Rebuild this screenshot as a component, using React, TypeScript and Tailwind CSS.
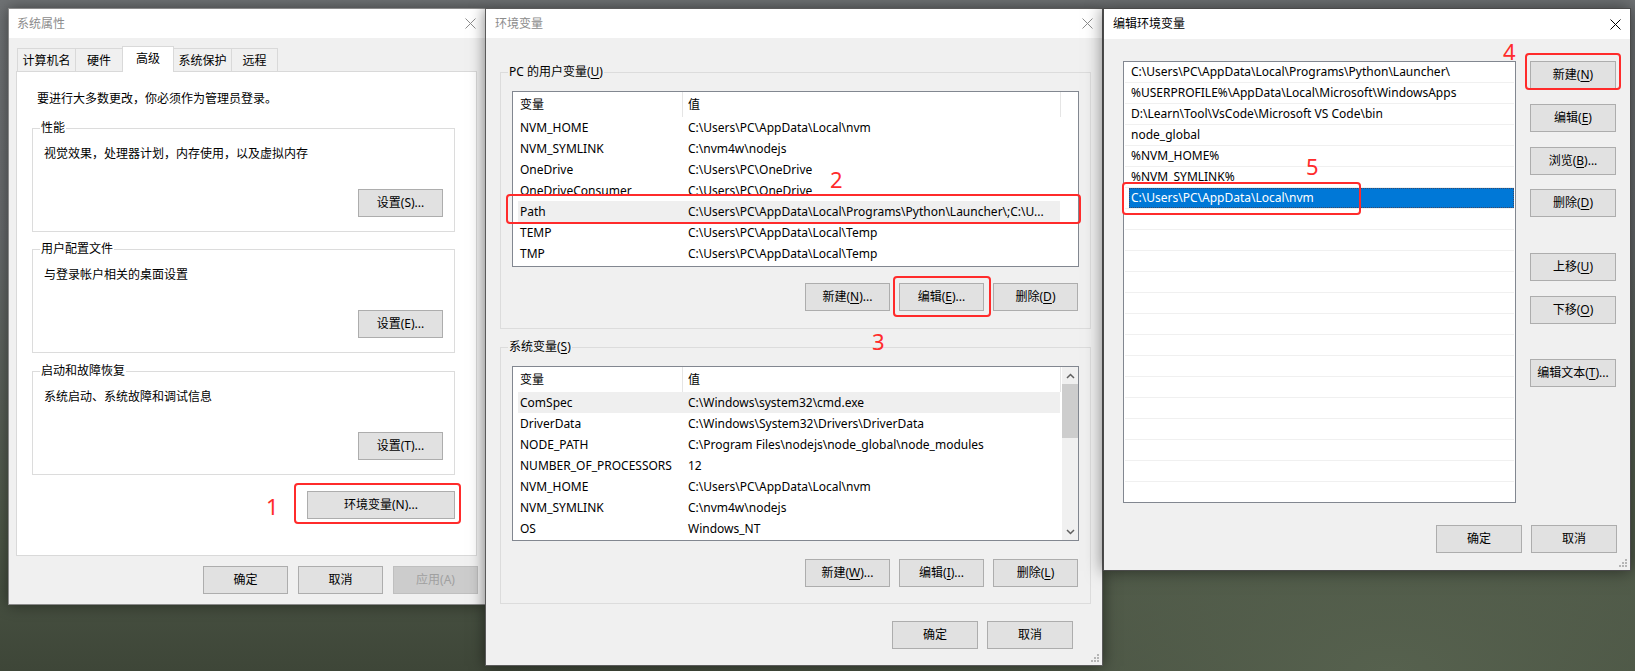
import React from 'react'

type Kids = { children?: React.ReactNode }

const userVars: [string, string][] = [
  ['NVM_HOME', 'C:\\Users\\PC\\AppData\\Local\\nvm'],
  ['NVM_SYMLINK', 'C:\\nvm4w\\nodejs'],
  ['OneDrive', 'C:\\Users\\PC\\OneDrive'],
  ['OneDriveConsumer', 'C:\\Users\\PC\\OneDrive'],
  ['Path', 'C:\\Users\\PC\\AppData\\Local\\Programs\\Python\\Launcher\\;C:\\U...'],
  ['TEMP', 'C:\\Users\\PC\\AppData\\Local\\Temp'],
  ['TMP', 'C:\\Users\\PC\\AppData\\Local\\Temp'],
]

const sysVars: [string, string][] = [
  ['ComSpec', 'C:\\Windows\\system32\\cmd.exe'],
  ['DriverData', 'C:\\Windows\\System32\\Drivers\\DriverData'],
  ['NODE_PATH', 'C:\\Program Files\\nodejs\\node_global\\node_modules'],
  ['NUMBER_OF_PROCESSORS', '12'],
  ['NVM_HOME', 'C:\\Users\\PC\\AppData\\Local\\nvm'],
  ['NVM_SYMLINK', 'C:\\nvm4w\\nodejs'],
  ['OS', 'Windows_NT'],
]

const pathItems = [
  'C:\\Users\\PC\\AppData\\Local\\Programs\\Python\\Launcher\\',
  '%USERPROFILE%\\AppData\\Local\\Microsoft\\WindowsApps',
  'D:\\Learn\\Tool\\VsCode\\Microsoft VS Code\\bin',
  'node_global',
  '%NVM_HOME%',
  '%NVM_SYMLINK%',
  'C:\\Users\\PC\\AppData\\Local\\nvm',
]

function U({ children }: Kids) {
  return <span className="underline underline-offset-[2px]">{children}</span>
}

function Btn({ children, className = '', disabled = false }: Kids & { className?: string; disabled?: boolean }) {
  return (
    <div
      className={`flex h-[28px] shrink-0 items-center justify-center border text-[12px] ${
        disabled ? 'border-[#bfbfbf] bg-[#cccccc] text-[#a0a0a0]' : 'border-[#adadad] bg-[#e1e1e1] text-black'
      } ${className}`}
    >
      {children}
    </div>
  )
}

function CloseX({ color }: { color: string }) {
  return (
    <svg width="11" height="11" viewBox="0 0 11 11">
      <path d="M0.5 0.5 L10.5 10.5 M10.5 0.5 L0.5 10.5" stroke={color} strokeWidth="1" fill="none" />
    </svg>
  )
}

function Grip() {
  return (
    <svg className="absolute bottom-[2px] right-[2px]" width="9" height="9" viewBox="0 0 9 9">
      {[
        [6, 0],
        [3, 3],
        [6, 3],
        [0, 6],
        [3, 6],
        [6, 6],
      ].map(([x, y]) => (
        <rect key={`${x}-${y}`} x={x} y={y} width="2" height="2" fill="#b5b5b5" />
      ))}
    </svg>
  )
}

function Chevron({ up = false }: { up?: boolean }) {
  return (
    <svg width="9" height="6" viewBox="0 0 9 6">
      <path d={up ? 'M1 5 L4.5 1.5 L8 5' : 'M1 1 L4.5 4.5 L8 1'} stroke="#606060" strokeWidth="1.5" fill="none" />
    </svg>
  )
}

function Group({ label, bg, className = '', children }: Kids & { label: React.ReactNode; bg: string; className?: string }) {
  return (
    <div className={`relative flex flex-col border ${className}`}>
      <span className={`absolute -top-[9px] left-[7px] px-[1px] leading-[16px] ${bg}`}>{label}</span>
      {children}
    </div>
  )
}

function Scrollbar() {
  return (
    <div className="flex w-[16px] shrink-0 flex-col bg-[#f0f0f0]">
      <div className="flex h-[17px] items-center justify-center">
        <Chevron up />
      </div>
      <div className="h-[54px] bg-[#cdcdcd]" />
      <div className="flex-1" />
      <div className="flex h-[17px] items-center justify-center">
        <Chevron />
      </div>
    </div>
  )
}

function VarList({ rows, highlight, scroll, height }: { rows: [string, string][]; highlight: number; scroll?: boolean; height: string }) {
  return (
    <div className={`flex w-[567px] border border-[#828790] bg-white ${height}`}>
      <div className="flex min-w-0 flex-1 flex-col overflow-hidden">
        <div className="flex h-[25px] shrink-0">
          <div className="flex w-[169px] items-center pl-[7px]">变量</div>
          <div className="flex w-[378px] items-center border-l border-[#e5e5e5] pl-[5px]">值</div>
          <div className="border-l border-[#e5e5e5]" />
        </div>
        {rows.map(([k, v], i) => (
          <div
            key={k + i}
            className={`ml-[5px] flex h-[21px] w-[542px] shrink-0 items-center ${i === highlight ? 'bg-[#efefef]' : ''}`}
          >
            <div className="w-[164px] shrink-0 overflow-hidden whitespace-nowrap pl-[2px]">{k}</div>
            <div className="min-w-0 flex-1 overflow-hidden whitespace-nowrap pl-[6px]">{v}</div>
          </div>
        ))}
      </div>
      {scroll && <Scrollbar />}
    </div>
  )
}

function SystemProperties() {
  const tabs = [
    { t: '计算机名', w: 'w-[59px]' },
    { t: '硬件', w: 'w-[48px]' },
    { t: '高级', w: 'w-[52px]', on: true },
    { t: '系统保护', w: 'w-[59px]' },
    { t: '远程', w: 'w-[47px]' },
  ]
  return (
    <div className="absolute left-[8px] top-[8px] flex h-[597px] w-[478px] flex-col border border-[#8a8a8a] bg-[#f0f0f0] shadow-[0_0_14px_rgba(0,0,0,0.45)]">
      <div className="flex h-[29px] shrink-0 items-center justify-between bg-white pl-[8px] pr-[9px]">
        <span className="text-[#8c8c8c]">系统属性</span>
        <CloseX color="#8c8c8c" />
      </div>
      <div className="flex flex-1 flex-col pl-[7px] pt-[10px]">
        <div className="flex h-[23px] items-end pl-[1px]">
          {tabs.map((tab) =>
            tab.on ? (
              <div
                key={tab.t}
                className={`relative z-10 -mb-[1px] -ml-[1px] flex h-[26px] items-center justify-center border border-b-0 border-[#d9d9d9] bg-white pb-[2px] ${tab.w}`}
              >
                {tab.t}
              </div>
            ) : (
              <div
                key={tab.t}
                className={`-ml-[1px] flex h-[23px] items-center justify-center border border-b-0 border-[#d9d9d9] pt-[2px] first:ml-0 ${tab.w}`}
              >
                {tab.t}
              </div>
            ),
          )}
        </div>
        <div className="flex h-[485px] w-[461px] flex-col border border-[#d9d9d9] bg-white pl-[15px] pt-[19px]">
          <div className="pl-[5px] leading-[16px]">要进行大多数更改，你必须作为管理员登录。</div>
          {[
            { label: '性能', text: '视觉效果，处理器计划，内存使用，以及虚拟内存', btn: '设置(S)...', mt: 'mt-[21px]' },
            { label: '用户配置文件', text: '与登录帐户相关的桌面设置', btn: '设置(E)...', mt: 'mt-[17px]' },
            { label: '启动和故障恢复', text: '系统启动、系统故障和调试信息', btn: '设置(T)...', mt: 'mt-[18px]' },
          ].map((g) => (
            <Group key={g.label} label={g.label} bg="bg-white" className={`h-[104px] w-[423px] border-[#dcdcdc] px-[11px] pt-[17px] ${g.mt}`}>
              <div className="leading-[16px]">{g.text}</div>
              <Btn className="mt-[27px] w-[85px] self-end">{g.btn}</Btn>
            </Group>
          ))}
          <div className="mt-[16px] flex w-[423px] justify-end">
            <Btn className="w-[148px]">环境变量(N)...</Btn>
          </div>
        </div>
        <div className="mt-[10px] flex justify-end gap-[10px] pr-[7px]">
          <Btn className="w-[85px]">确定</Btn>
          <Btn className="w-[85px]">取消</Btn>
          <Btn className="w-[85px]" disabled>
            应用(A)
          </Btn>
        </div>
      </div>
    </div>
  )
}

function EnvVariables() {
  return (
    <div className="absolute left-[485px] top-[8px] flex h-[658px] w-[618px] flex-col border border-[#5a5a5a] bg-[#f0f0f0] shadow-[0_0_14px_rgba(0,0,0,0.5)]">
      <div className="flex h-[29px] shrink-0 items-center justify-between bg-white pl-[9px] pr-[9px]">
        <span className="text-[#8c8c8c]">环境变量</span>
        <CloseX color="#8c8c8c" />
      </div>
      <div className="flex flex-1 flex-col pl-[14px]">
        <Group
          label={
            <>
              PC 的用户变量(<U>U</U>)
            </>
          }
          bg="bg-[#f0f0f0]"
          className="mt-[34px] h-[257px] w-[591px] border-[#dcdcdc] pl-[11px] pt-[18px]"
        >
          <VarList rows={userVars} highlight={4} height="h-[176px]" />
          <div className="mt-[16px] flex justify-end gap-[9px] pr-[12px]">
            <Btn className="w-[85px]">
              新建(<U>N</U>)...
            </Btn>
            <Btn className="w-[85px]">
              编辑(<U>E</U>)...
            </Btn>
            <Btn className="w-[85px]">
              删除(<U>D</U>)
            </Btn>
          </div>
        </Group>
        <Group
          label={
            <>
              系统变量(<U>S</U>)
            </>
          }
          bg="bg-[#f0f0f0]"
          className="mt-[18px] h-[257px] w-[591px] border-[#dcdcdc] pl-[11px] pt-[18px]"
        >
          <VarList rows={sysVars} highlight={0} scroll height="h-[175px]" />
          <div className="mt-[18px] flex justify-end gap-[9px] pr-[12px]">
            <Btn className="w-[85px]">
              新建(<U>W</U>)...
            </Btn>
            <Btn className="w-[85px]">
              编辑(<U>I</U>)...
            </Btn>
            <Btn className="w-[85px]">
              删除(<U>L</U>)
            </Btn>
          </div>
        </Group>
        <div className="mt-[17px] flex justify-end gap-[9px] pr-[29px]">
          <Btn className="w-[86px]">确定</Btn>
          <Btn className="w-[86px]">取消</Btn>
        </div>
      </div>
      <Grip />
    </div>
  )
}

function EditPath() {
  const side: { label: React.ReactNode; mt: string }[] = [
    { label: <>新建(<U>N</U>)</>, mt: 'mt-0' },
    { label: <>编辑(<U>E</U>)</>, mt: 'mt-[15px]' },
    { label: <>浏览(<U>B</U>)...</>, mt: 'mt-[15px]' },
    { label: <>删除(<U>D</U>)</>, mt: 'mt-[14px]' },
    { label: <>上移(<U>U</U>)</>, mt: 'mt-[36px]' },
    { label: <>下移(<U>O</U>)</>, mt: 'mt-[15px]' },
    { label: <>编辑文本(<U>T</U>)...</>, mt: 'mt-[35px]' },
  ]
  return (
    <div className="absolute left-[1103px] top-[8px] flex h-[563px] w-[528px] flex-col border border-[#4a4a4a] bg-[#f0f0f0] shadow-[0_0_16px_rgba(0,0,0,0.5)]">
      <div className="flex h-[30px] shrink-0 items-center justify-between bg-white pl-[9px] pr-[9px]">
        <span className="text-black">编辑环境变量</span>
        <CloseX color="#000000" />
      </div>
      <div className="flex flex-1 flex-col pl-[19px] pr-[13px]">
        <div className="mt-[22px] flex items-start">
          <div className="flex h-[442px] w-[393px] flex-col overflow-hidden border border-[#828790] bg-white">
            {Array.from({ length: 21 }).map((_, i) => {
              const item = pathItems[i]
              const sel = i === 6
              return (
                <div key={i} className="mx-[1px] flex h-[21px] shrink-0 border-b border-[#f0f0f0]">
                  {sel ? (
                    <div className="ml-[4px] flex flex-1 items-center border border-dotted border-[#3a4a6a] bg-[#0078d7] pl-[1px] text-white">
                      {item}
                    </div>
                  ) : (
                    <div className="flex flex-1 items-center whitespace-nowrap pl-[6px]">{item ?? ''}</div>
                  )}
                </div>
              )
            })}
          </div>
          <div className="ml-[14px] flex flex-col">
            {side.map((b, i) => (
              <Btn key={i} className={`w-[86px] ${b.mt}`}>
                {b.label}
              </Btn>
            ))}
          </div>
        </div>
        <div className="mt-[22px] flex justify-end gap-[9px]">
          <Btn className="w-[86px]">确定</Btn>
          <Btn className="w-[86px]">取消</Btn>
        </div>
      </div>
      <Grip />
    </div>
  )
}

function Mark({ box, num, numPos }: { box: string; num: string; numPos: string }) {
  return (
    <>
      <div className={`pointer-events-none absolute rounded-[4px] border-2 border-[#ff2b2b] ${box}`} />
      <div className={`pointer-events-none absolute text-[22px] leading-[22px] text-[#ff2b2b] ${numPos}`}>{num}</div>
    </>
  )
}

export default function App() {
  return (
    <div className="relative h-[671px] w-[1635px] overflow-hidden bg-[radial-gradient(ellipse_at_85%_100%,#56614e_0%,rgba(86,97,78,0)_45%),linear-gradient(180deg,#6f7274_0%,#66696b_35%,#4c5646_80%,#3e4638_100%)] font-['Noto_Sans','Noto_Sans_CJK_SC',sans-serif] text-[12px] text-black">
      <SystemProperties />
      <EnvVariables />
      <EditPath />

      <Mark box="left-[294px] top-[483px] h-[41px] w-[167px]" num="1" numPos="left-[266px] top-[495px]" />
      <Mark box="left-[506px] top-[194px] h-[30px] w-[575px]" num="2" numPos="left-[830px] top-[168px]" />
      <Mark box="left-[893px] top-[276px] h-[41px] w-[98px]" num="3" numPos="left-[872px] top-[330px]" />
      <Mark box="left-[1525px] top-[53px] h-[37px] w-[96px]" num="4" numPos="left-[1503px] top-[40px]" />
      <Mark box="left-[1122px] top-[182px] h-[33px] w-[239px]" num="5" numPos="left-[1306px] top-[155px]" />
    </div>
  )
}
